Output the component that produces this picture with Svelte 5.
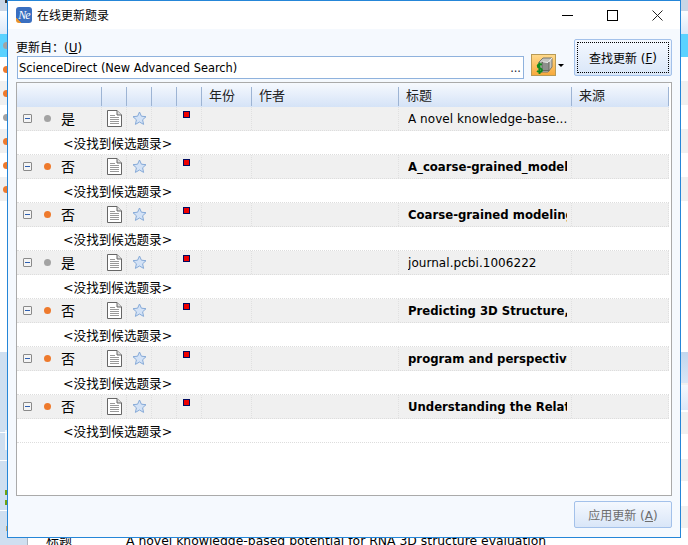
<script>
  const records = [
    { found: "是", title: "A novel knowledge-base...", bold: false, active: false },
    { found: "否", title: "A_coarse-grained_model_for_RNA", bold: true, active: true },
    { found: "否", title: "Coarse-grained modeling of RNA", bold: true, active: true },
    { found: "是", title: "journal.pcbi.1006222", bold: false, active: false },
    { found: "否", title: "Predicting 3D Structure, Flexibility", bold: true, active: true },
    { found: "否", title: "program and perspectives of RNA", bold: true, active: true },
    { found: "否", title: "Understanding the Relative Stability", bold: true, active: true }
  ];
  const backRows = ["orange", "orange", "grey", "orange", "orange", "orange"];
</script>

<div class="screen">
  <div class="back">
    <div class="back_top"></div>
    <div class="back_head"></div>
    <div class="back_sel"><i class="back_dot grey"></i></div>
    <div class="back_rows">
      {#each backRows as dot, i}
        <div class="back_row" class:shade={i % 2 == 1}><i class="back_dot {dot}"></i></div>
      {/each}
    </div>
    <div class="back_gap"></div>
    <div class="back_lower">
      <div class="back_side"></div>
      <div class="back_main">
        <div class="back_grid"></div>
        <div class="back_text"><span class="back_label">标题</span><span>A novel knowledge-based potential for RNA 3D structure evaluation</span></div>
      </div>
    </div>
  </div>

  <div class="dialog">
    <header class="titlebar">
      <span class="appicon">Ne</span>
      <span class="title">在线更新题录</span>
      <div class="controls">
        <svg width="11" height="11" viewBox="0 0 11 11"><path d="M0 5.5h11" stroke="#000" /></svg>
        <svg width="11" height="11" viewBox="0 0 11 11"><rect x="0.5" y="0.5" width="10" height="10" fill="none" stroke="#000" /></svg>
        <svg width="11" height="11" viewBox="0 0 11 11"><path d="M0.5 0.5l10 10M10.5 0.5l-10 10" stroke="#222" fill="none" /></svg>
      </div>
    </header>

    <div class="source">
      <div class="source_left">
        <div class="source_label">更新自：(<u>U</u>)</div>
        <div class="source_input"><span>ScienceDirect (New Advanced Search)</span><span class="dots">...</span></div>
      </div>
      <button class="iconbtn" type="button">
        <svg width="20" height="19" viewBox="0 0 20 19">
          <path d="M5 6l4-4h9v9l-4 5H5z" fill="#c4c4bf" stroke="#77776f" />
          <rect x="8" y="6.5" width="7" height="8" fill="#8d8f8c" stroke="#66675f" />
          <path d="M9 6l5 .5 4-4.500" fill="none" stroke="#f2f2f2" />
          <path d="M8 8.500C5 7.500 3 9 4 11c.7 1.400 4 1 4 3.300 0 1.700-3 2-5 .7M5.500 6.500v11.500" fill="none" stroke="#0f8a1c" stroke-width="1.900" />
        </svg>
      </button>
      <span class="caret"></span>
      <button class="btn find" type="button"><span class="focus">查找更新 (<u>F</u>)</span></button>
    </div>

    <div class="grid">
      <div class="head">
        <div class="hc c0"></div>
        <div class="hc c1"></div>
        <div class="hc c1"></div>
        <div class="hc c1"></div>
        <div class="hc c1"></div>
        <div class="hc c2">年份</div>
        <div class="hc c3">作者</div>
        <div class="hc c4">标题</div>
        <div class="hc c5">来源</div>
      </div>

      {#each records as rec}
        <div class="row parent">
          <div class="cell c0">
            <span class="expander"></span>
            <i class="dot" class:on={rec.active}></i>
            <span class="found">{rec.found}</span>
          </div>
          <div class="cell c1">
            <svg class="doc" width="15" height="17" viewBox="0 0 15 17">
              <path d="M0.500 0.500h9.500l4.500 4.500v11.500h-14z" fill="#fff" stroke="#666" />
              <path d="M10 0.500v4.500h4.500" fill="#ddd" stroke="#666" />
              <path d="M3 5.500h5M3 7.500h9M3 9.500h9M3 11.500h9M3 13.500h9" stroke="#999" />
            </svg>
          </div>
          <div class="cell c1">
            <svg class="star" width="15" height="15" viewBox="0 0 15 15">
              <path d="M7.500 1l1.900 4.200 4.600.5-3.400 3.100 1 4.600-4.100-2.400-4.100 2.400 1-4.600L1 5.700l4.600-.5z" fill="#d3e2f6" stroke="#86aad8" />
            </svg>
          </div>
          <div class="cell c1"></div>
          <div class="cell c1 flagcell"><span class="flag"></span></div>
          <div class="cell c2"></div>
          <div class="cell c3"></div>
          <div class="cell c4"><span class="rec_title" class:bold={rec.bold}>{rec.title}</span></div>
          <div class="cell c5"></div>
        </div>
        <div class="row child"><span class="none">&lt;没找到候选题录&gt;</span></div>
      {/each}
    </div>

    <footer class="foot">
      <button class="btn apply" type="button" disabled>应用更新 (<u>A</u>)</button>
    </footer>
  </div>
</div>

<style>
  :global(body) {
    margin: 0;
    background: #fff;
  }

  .screen {
    position: relative;
    width: 688px;
    height: 545px;
    overflow: hidden;
    font-family: "DejaVu Sans", "Noto Sans CJK SC", sans-serif;
    font-size: 12px;
    color: #000;
  }

  /* window behind the dialog */
  .back {
    display: flex;
    flex-direction: column;
    height: 545px;
  }

  .back_top {
    height: 11px;
    background: linear-gradient(#333, #333) 5px 0 / 3px 3px no-repeat, #c9d6e6;
  }

  .back_head {
    height: 23px;
    background: linear-gradient(#fbfdff, #dbe8f8);
  }

  .back_sel {
    height: 23px;
    background: #5bd2ff;
    display: flex;
    align-items: center;
  }

  .back_rows {
    height: 144px;
  }

  .back_row {
    height: 24px;
    display: flex;
    align-items: center;
  }

  .back_row.shade {
    background: #f0f0f0;
  }

  .back_dot {
    width: 7px;
    height: 7px;
    border-radius: 50%;
    margin-left: 3px;
  }

  .back_dot.orange {
    background: #ee7a2d;
  }

  .back_dot.grey {
    background: #a3a3a3;
  }

  .back_gap {
    height: 151px;
  }

  .back_lower {
    flex: 1;
    display: flex;
    overflow: hidden;
  }

  .back_side {
    width: 27px;
    border-right: 1px solid #aab4bf;
    background:
      linear-gradient(#fff, #fff) 0 80px / 100% 1px no-repeat,
      linear-gradient(#fff, #fff) 0 108px / 100% 1px no-repeat,
      linear-gradient(#fff, #fff) 0 158px / 100% 1px no-repeat,
      linear-gradient(#6fa310, #6fa310) 5px 138px / 3px 5px no-repeat,
      linear-gradient(#6fa310, #6fa310) 5px 148px / 3px 5px no-repeat,
      linear-gradient(#f4f6f8, #f4f6f8) 5px 78px / 3px 20px no-repeat,
      linear-gradient(#c9a86a, #c9a86a) 6px 174px / 2px 5px no-repeat,
      #cfdff0;
  }

  .back_main {
    flex: 1;
    display: flex;
    flex-direction: column;
  }

  .back_grid {
    height: 181px;
    flex: none;
    background-image:
      linear-gradient(#c2d6ee, #d9e6f6),
      linear-gradient(#f4f8fe, #dbe7f8),
      linear-gradient(#f0f0f0 0 22px, transparent 22px 47px);
    background-repeat: no-repeat, no-repeat, repeat-y;
    background-size: 100% 31px, 100% 25px, 100% 47px;
    background-position: 0 0, 0 33px, 0 60px;
  }

  .back_text {
    display: flex;
    font-size: 12.4px;
    line-height: 16px;
    padding-left: 18px;
    flex: none;
  }

  .back_label {
    width: 80px;
    font-size: 13px;
  }

  /* dialog */
  .dialog {
    position: absolute;
    left: 7px;
    top: 0;
    width: 672px;
    height: 536px;
    background: #f5f9fe;
    border: 1px solid #2586d8;
    display: flex;
    flex-direction: column;
  }

  .titlebar {
    height: 28px;
    padding: 0 0 0 8px;
    background: #fff;
    display: flex;
    align-items: center;
    flex: none;
  }

  .appicon {
    width: 16px;
    height: 16px;
    border-radius: 3px;
    background: linear-gradient(225deg, #3a6fc0 0 82%, #e8922c 82%);
    color: #fff;
    font: italic 12px/16px "Liberation Serif", serif;
    letter-spacing: -1px;
    text-align: center;
    flex: none;
  }

  .title {
    margin: -1px 0 0 5px;
    font-size: 12px;
  }

  .controls {
    margin-left: auto;
    display: flex;
    gap: 34px;
    padding-right: 17px;
  }

  .source {
    display: flex;
    padding: 11px 8px 0 8px;
    height: 42px;
    box-sizing: content-box;
    flex: none;
  }

  .source_left {
    width: 507px;
    flex: none;
  }

  .source_label {
    font-size: 12px;
    line-height: 16px;
    height: 16px;
  }

  .source_input {
    margin-left: 1px;
    height: 21px;
    width: 503px;
    background: #fff;
    border: 1px solid #8fb2dd;
    display: flex;
    justify-content: space-between;
    align-items: center;
    padding: 0 1px;
    font-size: 11.4px;
  }

  .dots {
    color: #223;
    padding-right: 1px;
  }

  .iconbtn {
    margin: 14px 0 0 8px;
    width: 25px;
    height: 22px;
    padding: 0;
    border: 1px solid #b89a55;
    background: linear-gradient(#ffd98a, #f7a93c);
    display: flex;
    align-items: center;
    justify-content: center;
    flex: none;
  }

  .caret {
    margin: 24px 0 0 2px;
    width: 0;
    height: 0;
    border: 3px solid transparent;
    border-top: 3px solid #000;
    flex: none;
  }

  .btn {
    font-family: inherit;
    font-size: 12px;
    border: 1px solid #a3c1ea;
    background: linear-gradient(#f4f8fe, #d9e6f8);
    border-radius: 2px;
    padding: 0;
    color: #000;
  }

  .find {
    margin-left: auto;
    margin-top: -1px;
    width: 98px;
    height: 37px;
    padding: 2px;
    flex: none;
  }

  .focus {
    display: flex;
    height: 100%;
    align-items: center;
    justify-content: center;
    border: 1px dotted #000;
    box-sizing: border-box;
  }

  .grid {
    margin: 0 8px;
    height: 412px;
    background: #fff;
    border: 1px solid #aaa;
    overflow: hidden;
    flex: none;
  }

  .head,
  .row {
    display: flex;
    width: 652px;
  }

  .head {
    height: 24px;
    background: linear-gradient(#f6f9fe, #d5e3f7);
  }

  .hc {
    border-right: 1px solid #9db4d4;
    margin: 4px 0 1px 0;
    padding: 0 0 0 7px;
    box-sizing: border-box;
    line-height: 18px;
    font-size: 13px;
    color: #222;
  }

  .c0 { width: 85px; }
  .c1 { width: 25px; }
  .c2 { width: 50px; }
  .c3 { width: 147px; }
  .c4 { width: 173px; }
  .c5 { width: 97px; }

  .row {
    height: 24px;
    box-sizing: border-box;
    border-bottom: 1px dotted #ddd;
    align-items: stretch;
  }

  .parent {
    background: #f0f0f0;
  }

  .cell {
    border-right: 1px dotted #e0e0e0;
    box-sizing: border-box;
    display: flex;
    align-items: center;
    overflow: hidden;
    flex: none;
  }

  .cell.c0 {
    padding-left: 6px;
  }

  .cell.c1 {
    justify-content: center;
  }

  .cell.flagcell {
    padding-right: 6px;
  }

  .cell.c4 {
    padding: 1px 4px 0 9px;
  }

  .expander {
    width: 9px;
    height: 9px;
    border: 1px solid #8a8a8a;
    border-radius: 1px;
    background: linear-gradient(#2e5fb0, #2e5fb0) center / 5px 1px no-repeat, #f4f4f4;
    box-sizing: border-box;
    flex: none;
  }

  .dot {
    width: 7px;
    height: 7px;
    border-radius: 50%;
    background: #a3a3a3;
    margin-left: 12px;
    flex: none;
  }

  .dot.on {
    background: #ee7a2d;
  }

  .found {
    margin: -2px 0 0 10px;
    font-size: 14px;
  }

  .flag {
    width: 5px;
    height: 5px;
    background: #f00000;
    border: 1px solid #000a60;
    margin-top: -8px;
  }

  .rec_title {
    white-space: nowrap;
    font-size: 12px;
    overflow: hidden;
    min-width: 0;
    letter-spacing: 0.05px;
  }

  .bold {
    font-weight: bold;
    font-size: 11.7px;
    letter-spacing: 0;
  }

  .child {
    background: #fff;
    align-items: center;
    padding: 0 0 1px 46px;
  }

  .none {
    font-size: 12.6px;
  }

  .foot {
    display: flex;
    justify-content: flex-end;
    padding: 5px 8px 0 0;
  }

  .apply {
    width: 98px;
    height: 27px;
    color: #6d6d6d;
  }
</style>
